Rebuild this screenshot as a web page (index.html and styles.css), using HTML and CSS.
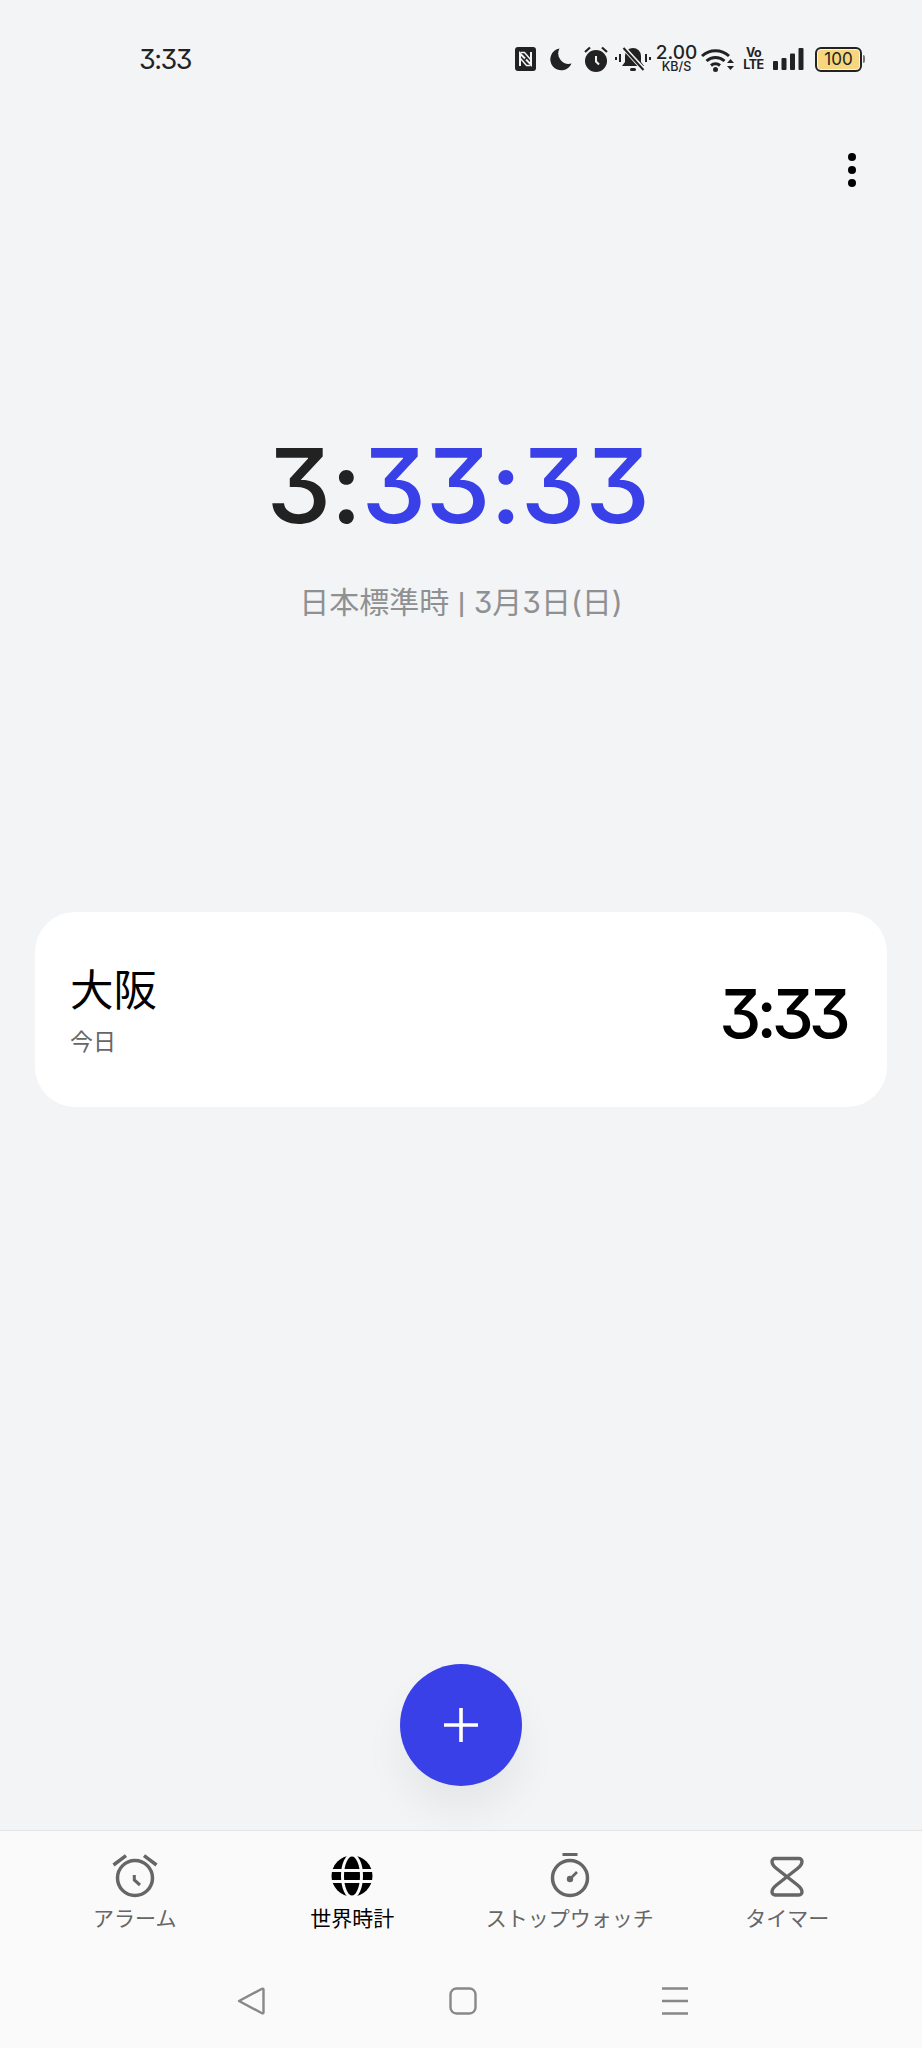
FILE: index.html
```html
<!DOCTYPE html>
<html lang="ja">
<head>
    <meta charset="UTF-8" />
    <title>世界時計</title>
    <link rel="stylesheet" href="styles.css">
</head>
<body>
    <div class="phone">
        <div class="status-bar">
            <span class="status-time">3:33</span>
            <div class="status-icons">
                <svg width="21" height="24" viewBox="0 0 21 24"><rect width="21" height="24" rx="3" fill="#222"/><path d="M5 19V6.500l5 5M16 5v12.500l-5-5" fill="none" stroke="#f3f4f6" stroke-width="2"/><path d="M5.500 5.500h4l6 7M15.500 18.500h-4l-6-7" fill="none" stroke="#f3f4f6" stroke-width="1.500"/></svg>
                <svg class="icon-moon" width="23" height="23" viewBox="0 0 23 23"><path d="M10.500 0.500A11 11 0 1 0 22.500 15.500 10.500 10.500 0 0 1 10.500 0.500z" fill="#222"/></svg>
                <svg class="icon-alarm" width="24" height="26" viewBox="0 0 24 26"><circle cx="12" cy="15" r="11" fill="#222"/><path d="M1 6l5-4.500M23 6l-5-4.500" stroke="#222" stroke-width="2.200"/><path d="M12 10v5.500l3 3" fill="none" stroke="#f3f4f6" stroke-width="2"/></svg>
                <svg class="icon-bell" width="36" height="26" viewBox="0 0 36 26"><path d="M18 2a8 8 0 0 0-8 8v6l-3 4h22l-3-4v-6a8 8 0 0 0-8-8z" fill="#222"/><rect x="15" y="22" width="6" height="3" rx="1.500" fill="#222"/><path d="M8 1l21 23" stroke="#f3f4f6" stroke-width="4.500"/><path d="M8.500 2l20 22" stroke="#222" stroke-width="2"/><path d="M1 11v3M5 8v8M31 8v8M35 11v3" stroke="#222" stroke-width="2"/></svg>
                <div class="net-speed">
                    <span class="net-value">2.00</span>
                    <span class="net-unit">KB/S</span>
                </div>
                <svg class="icon-wifi" width="33" height="25" viewBox="0 0 33 25"><path d="M1 9a20 20 0 0 1 27 0M5.500 14a13.500 13.500 0 0 1 18 0M10 18.500a7 7 0 0 1 9 0" fill="none" stroke="#222" stroke-width="3"/><circle cx="14.500" cy="22.500" r="2.500" fill="#222"/><path d="M26 16l3.500-4 3.500 4zM26 19h7l-3.500 4z" fill="#222"/></svg>
                <div class="volte"><span>Vo</span><span>LTE</span></div>
                <svg class="icon-signal" width="31" height="23" viewBox="0 0 31 23"><rect y="13" width="5" height="9" rx="1" fill="#222"/><rect x="8.500" y="10" width="5" height="12" rx="1" fill="#222"/><rect x="17" y="5.500" width="5" height="16.500" rx="1" fill="#222"/><rect x="25.500" y="0" width="5" height="22" rx="1" fill="#222"/></svg>
                <div class="battery">
                    <div class="battery-body">100</div>
                    <div class="battery-cap"></div>
                </div>
            </div>
        </div>

        <div class="toolbar">
            <div class="menu-dots"><i></i><i></i><i></i></div>
        </div>

        <div class="clock">
            <div class="clock-time">3:<span class="clock-accent">33:33</span></div>
            <div class="clock-date">日本標準時 <span class="date-sep">|</span> 3月3日(日)</div>
        </div>

        <div class="city-card">
            <div>
                <div class="city-name">大阪</div>
                <div class="city-day">今日</div>
            </div>
            <div class="city-time">3:33</div>
        </div>

        <div class="fab-row">
            <div class="fab"><svg width="34" height="34" viewBox="0 0 34 34"><path d="M17 0v34M0 17h34" stroke="#fff" stroke-width="3.600"/></svg></div>
        </div>

        <div class="tab-bar">
            <div class="tabs">
                <div class="tab">
                    <svg width="48" height="48" viewBox="0 0 48 48"><circle cx="24" cy="26" r="17.500" fill="none" stroke="#666" stroke-width="3.500"/><path d="M2.500 13L15 3.700M45.500 13L33 3.700" stroke="#666" stroke-width="3.500"/><path d="M23.300 23v5l5.700 5" fill="none" stroke="#666" stroke-width="3"/></svg>
                    <span>アラーム</span>
                </div>
                <div class="tab tab-active">
                    <svg width="48" height="48" viewBox="0 0 48 48"><circle cx="24" cy="24" r="20.500" fill="#000"/><ellipse cx="24" cy="24" rx="9.500" ry="21" fill="none" stroke="#fafafa" stroke-width="3"/><path d="M2 18.500h44M2 29.500h44" stroke="#fafafa" stroke-width="2.800"/></svg>
                    <span>世界時計</span>
                </div>
                <div class="tab">
                    <svg width="48" height="48" viewBox="0 0 48 48"><circle cx="24" cy="26" r="17.500" fill="none" stroke="#666" stroke-width="3.500"/><path d="M16.500 2.500h15" stroke="#666" stroke-width="3"/><circle cx="24" cy="27" r="3.200" fill="#666"/><path d="M24 27l7-7" stroke="#666" stroke-width="2.600"/></svg>
                    <span>ストップウォッチ</span>
                </div>
                <div class="tab">
                    <svg width="48" height="48" viewBox="0 0 48 48"><path d="M12 6.500h24a3 3 0 0 1 3 3c0 3-2 5-4.500 7L13.500 33c-2.500 2-4.500 4-4.500 7a3 3 0 0 0 3 3h24a3 3 0 0 0 3-3c0-3-2-5-4.500-7L13.500 16.500C11 14.500 9 12.500 9 9.500a3 3 0 0 1 3-3z" fill="none" stroke="#666" stroke-width="3.400"/></svg>
                    <span>タイマー</span>
                </div>
            </div>
            <div class="nav-buttons">
                <svg width="28" height="28" viewBox="0 0 28 28"><path d="M2 14L25 1.800q1.500-.5 1.500 1v22.400q0 1.500-1.500 1z" fill="none" stroke="#888" stroke-width="2.400" stroke-linejoin="round"/></svg>
                <svg width="28" height="28" viewBox="0 0 28 28"><rect x="1.500" y="1.500" width="25" height="25" rx="6" fill="none" stroke="#888" stroke-width="2.400"/></svg>
                <svg width="28" height="28" viewBox="0 0 28 28"><path d="M1 1.500h26M1 14h26M1 26.500h26" stroke="#888" stroke-width="2.400"/></svg>
            </div>
        </div>
    </div>
</body>
</html>
```

FILE: styles.css
```css
body {
    margin: 0;
    font-family: Inter, "Noto Sans CJK JP", sans-serif;
    font-feature-settings: "cv09";
    background-color: #f3f4f6;
}

.phone {
    display: flex;
    flex-direction: column;
    height: 2048px;
    overflow: hidden;
    background-color: #f3f4f6;
}

.status-bar {
    display: flex;
    justify-content: space-between;
    align-items: center;
    height: 118px;
    padding: 0 57px 0 139px;
    box-sizing: border-box;
    color: #222;
}

.status-time {
    font-size: 27px;
    letter-spacing: -1.500px;
}

.status-icons {
    display: flex;
    align-items: center;
}

.status-icons svg {
    display: block;
}

.icon-moon {
    margin-left: 13px;
}

.icon-alarm {
    margin-left: 12px;
}

.icon-bell {
    margin-left: 7px;
}

.net-speed {
    display: flex;
    flex-direction: column;
    align-items: center;
    width: 36px;
    margin-left: 7.500px;
    font-weight: 500;
}

.net-value {
    font-size: 19px;
    line-height: 16px;
}

.net-unit {
    font-size: 12.500px;
    line-height: 12px;
}

.icon-wifi {
    margin-left: 6.500px;
}

.volte {
    display: flex;
    flex-direction: column;
    align-items: center;
    width: 17px;
    margin-left: 11px;
    font-size: 12.500px;
    font-weight: 700;
    line-height: 12px;
    letter-spacing: -0.500px;
}

.icon-signal {
    margin-left: 11px;
}

.battery {
    display: flex;
    align-items: center;
    margin-left: 11px;
}

.battery-body {
    width: 43px;
    height: 21px;
    border: 2px solid #222;
    border-radius: 6px;
    background: #f6d67e;
    box-shadow: inset 0 0 0 1px #f3f4f6;
    font-size: 17px;
    line-height: 21px;
    text-align: center;
}

.battery-cap {
    width: 2px;
    height: 8px;
    margin-left: 1px;
    border-radius: 0 2px 2px 0;
    background: #777;
}

.toolbar {
    display: flex;
    justify-content: flex-end;
    align-items: center;
    height: 104px;
    padding-right: 66px;
}

.menu-dots {
    display: flex;
    flex-direction: column;
    gap: 5px;
}

.menu-dots i {
    display: block;
    width: 8px;
    height: 8px;
    border-radius: 50%;
    background: #000;
}

.clock {
    margin-top: 204px;
    text-align: center;
}

.clock-time {
    padding-right: 6px;
    font-size: 103px;
    font-weight: 450;
    line-height: 120px;
    letter-spacing: -0.500px;
    color: #222;
}

.clock-accent {
    color: #3a40e8;
}

.clock-date {
    margin-top: 36px;
    font-size: 30px;
    line-height: 40px;
    color: #8f9092;
}

.date-sep {
    font-family: Roboto, sans-serif;
    font-weight: 700;
    font-size: 30px;
    line-height: 0;
}

.city-card {
    display: flex;
    justify-content: space-between;
    align-items: center;
    height: 195px;
    margin: 290px 35px 0;
    padding: 0 41px 0 35px;
    box-sizing: border-box;
    border-radius: 40px;
    background: #fff;
}

.city-name {
    font-size: 43.500px;
    line-height: 54px;
    color: #000;
}

.city-day {
    margin-top: 10px;
    font-size: 23px;
    line-height: 30px;
    color: #666;
}

.city-time {
    padding-top: 8px;
    font-size: 67px;
    font-weight: 500;
    letter-spacing: -5px;
    color: #000;
}

.fab-row {
    display: flex;
    justify-content: center;
    margin-top: auto;
    margin-bottom: 44px;
}

.fab {
    display: flex;
    justify-content: center;
    align-items: center;
    width: 122px;
    height: 122px;
    border-radius: 50%;
    background: #3a40e8;
    box-shadow: 0 24px 40px rgba(0,0,0,0.06);
}

.tab-bar {
    height: 218px;
    box-sizing: border-box;
    border-top: 1px solid #e4e4e6;
    background: #fafafa;
}

.tabs {
    display: grid;
    grid-template-columns: repeat(4, 1fr);
    padding: 21px 26px 0;
}

.tab {
    display: flex;
    flex-direction: column;
    align-items: center;
    font-size: 21px;
    line-height: 28px;
    color: #666;
    white-space: nowrap;
}

.tab svg {
    display: block;
    margin-bottom: 5px;
}

.tab-active {
    color: #000;
}

.nav-buttons {
    display: grid;
    grid-template-columns: repeat(3, 212px);
    justify-items: center;
    padding: 0 141px 0 145px;
    margin-top: 54px;
}

.nav-buttons svg {
    display: block;
}
```
